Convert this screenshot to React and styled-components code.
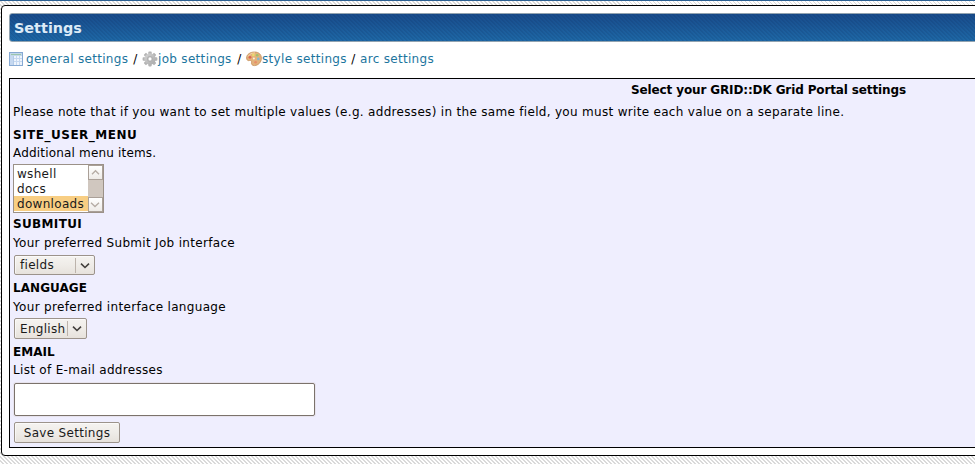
import React from "react";
import styled, { createGlobalStyle } from "styled-components";

const Global = createGlobalStyle`
  * { box-sizing: border-box; }
  html, body { margin: 0; height: 464px; overflow: hidden; }
  body {
    font-family: "DejaVu Sans", sans-serif;
    font-size: 12px;
    letter-spacing: 0.31px;
    color: #000;
    background: repeating-linear-gradient(45deg, #fff 0 1.7px, #dadada 1.7px 2.83px);
  }
`;

const Page = styled.div`
  width: 975px;
  height: 464px;
  overflow: hidden;
`;
const TopStrip = styled.div`
  height: 1px;
  background: #2a5f92;
`;
const Panel = styled.main`
  width: 1536px;
  height: 451px;
  margin: 4px 0 0 1px;
  padding: 7px;
  border: 1px solid #000;
  border-radius: 4px;
  background: #fff;
`;
const TitleBar = styled.h1`
  height: 29px;
  margin: 0;
  padding-left: 4px;
  border: 1px solid #92a3b0;
  border-radius: 3px;
  background:
    repeating-linear-gradient(45deg, rgba(0, 20, 60, 0.09) 0 1.41px, transparent 1.41px 2.83px),
    linear-gradient(#184b8b, #1e68a6);
  color: #dcebf7;
  font-size: 14.4px;
  font-weight: 700;
  line-height: 28px;
  letter-spacing: 0;
`;
const Nav = styled.nav`
  display: flex;
  align-items: center;
  height: 33px;
  white-space: pre;
`;
const NavLink = styled.a`
  display: flex;
  align-items: center;
  width: ${(p) => p.$width}px;
  gap: ${(p) => p.$gap || 0}px;
  color: #1c759e;
`;
const Slash = styled.span`
  width: 13px;
  text-align: center;
`;
const SettingsBox = styled.form`
  width: 1519px;
  height: 370px;
  margin-top: 3px;
  padding-left: 3px;
  border: 1px solid #000;
  background: #efeefe;
`;
const Line = styled.div`
  height: ${(p) => p.$height}px;
  line-height: ${(p) => p.$height + 2}px;
  letter-spacing: ${(p) => p.$tracking ?? 0.31}px;
  white-space: nowrap;
`;
const Heading = styled(Line)`
  font-weight: 700;
`;
const BoxTitle = styled(Heading)`
  padding-right: 3px;
  text-align: center;
`;
const ListBox = styled.div`
  display: flex;
  width: 91px;
  height: 49px;
  margin-top: 4px;
  border: 1px solid #9b9188;
  background: #fff;
`;
const Options = styled.div`
  flex: 1;
`;
const Option = styled.div`
  height: 15px;
  padding-left: 3px;
  color: #1a1a1a;
  line-height: 17px;
  white-space: nowrap;
  background: ${(p) => (p.$selected ? "#f8ce83" : "#fff")};
  &:first-child { height: 16px; line-height: 18px; }
`;
const ScrollBar = styled.div`
  display: flex;
  flex-direction: column;
  justify-content: space-between;
  width: 15px;
  background: #d0c7bf;
`;
const ScrollButton = styled.div`
  display: grid;
  place-items: center;
  height: 15px;
  border: 1px solid #aaa098;
  background: linear-gradient(#fff, #eeebe7);
`;
const Button = styled.div`
  display: flex;
  align-items: center;
  justify-content: ${(p) => (p.$center ? "center" : "flex-start")};
  width: ${(p) => p.$width}px;
  height: ${(p) => p.$height}px;
  margin: ${(p) => p.$top}px 0 0 1px;
  padding: 0 0 0 ${(p) => (p.$center ? 0 : 5)}px;
  border: 1px solid #9c938b;
  border-radius: 2px;
  background: linear-gradient(#f5f3f0, #efece8 50%, #e7e2dc);
  box-shadow: inset 1px 1px 0 rgba(255, 255, 255, 0.6);
  color: #1a1a1a;
  font: inherit;
  letter-spacing: 0.3px;
`;
const Arrow = styled.span`
  display: grid;
  place-items: center;
  width: 19px;
  height: 15px;
  margin-left: auto;
  border-left: 1px solid #bcb3ab;
`;
const TextArea = styled.textarea`
  display: block;
  width: 301px;
  height: 33px;
  margin: 7px 0 0 1px;
  border: 1px solid #7b726b;
  border-radius: 2px;
  background: #fff;
  box-shadow: 0 0 0 1px #e7e3ed;
  resize: none;
  outline: 0;
`;

function Chevron({ up, color = "#423f3c", weight = 1.6 }) {
  return (
    <svg width="11" height="11" viewBox="0 0 11 11" fill="none">
      <path d={up ? "M2 7.2 5.5 3.7 9 7.2" : "M1 3.7 5 7.5 9 3.7"} stroke={color} strokeWidth={weight} />
    </svg>
  );
}

function TableIcon() {
  return (
    <svg width="14" height="14" viewBox="0 0 14 14" shapeRendering="crispEdges">
      <path fill="#86a9d3" d="M0 0h14v14H0z" />
      <path fill="#eef4fc" d="M1 1h12v12H1z" />
      <path fill="#c3d8ea" d="M1 1h12v3H1z" />
      <path fill="#9cc5ac" d="M2 2h10v1H2z" />
      <path fill="#c5d8f0" d="M1 4h3v9H1zM5 6h8v1H5zM5 9h8v1H5zM7 4h1v9H7zM10 4h1v9h-1z" />
      <path fill="#b3cbe8" d="M4 4h1v9H4z" />
    </svg>
  );
}

function GearIcon() {
  return (
    <svg width="16" height="16" viewBox="0 0 16 16">
      <defs>
        <linearGradient id="steel" x1="0" y1="0" x2="1" y2="1">
          <stop offset="0" stopColor="#d6d6d6" />
          <stop offset="1" stopColor="#a8a8a8" />
        </linearGradient>
      </defs>
      <g fill="#b4b4b4">
        {[0, 45, 90, 135].map((a) => (
          <rect key={a} x="6.3" y="0.6" width="3.4" height="14.8" rx="0.8" transform={`rotate(${a} 8 8)`} />
        ))}
      </g>
      <circle cx="8" cy="8" r="5.7" fill="url(#steel)" />
      <circle cx="8" cy="8" r="2.6" fill="#c6c6c6" stroke="#a9a9a9" strokeWidth="0.7" />
      <circle cx="8" cy="8" r="1.4" fill="#fff" />
    </svg>
  );
}

function PaletteIcon() {
  return (
    <svg width="16" height="16" viewBox="0 0 16 16">
      <path
        d="M8.500 1C4 1 .6 3.500.6 7c0 2 1.300 3 3 2.500 1.500-.4 2.200.6 1.900 1.900-.4 1.900.8 3.400 3 3.200 4-.3 6.900-3.500 6.900-7.400C15.400 3.400 12.800 1 8.500 1z"
        fill="#e2b27c"
        stroke="#c58f5b"
        strokeWidth="0.8"
      />
      <path d="M2 5.500C3.500 3 6 1.900 9 1.900" stroke="#f3d4ab" fill="none" />
      <circle cx="4" cy="6.300" r="1.400" fill="#dc6450" />
      <circle cx="7.400" cy="3.900" r="1.300" fill="#eddb6c" />
      <circle cx="11.200" cy="4.200" r="1.300" fill="#9cc36b" />
      <circle cx="12.300" cy="7.900" r="1.300" fill="#82b5d3" />
      <circle cx="9.600" cy="11.300" r="1.300" fill="#e88e69" />
      <circle cx="7.900" cy="7.500" r="1" fill="#fbf0df" />
    </svg>
  );
}

function Select({ value, width, height, top }) {
  return (
    <Button $width={width} $height={height} $top={top}>
      {value}
      <Arrow><Chevron /></Arrow>
    </Button>
  );
}

export default function App() {
  return (
    <Page>
      <Global />
      <TopStrip />
      <Panel>
        <TitleBar>Settings</TitleBar>
        <Nav>
          <NavLink $width={120} $gap={3}><TableIcon />general settings</NavLink>
          <Slash>/</Slash>
          <NavLink $width={91}><GearIcon />job settings</NavLink>
          <Slash>/</Slash>
          <NavLink $width={101}><PaletteIcon />style settings</NavLink>
          <Slash>/</Slash>
          <NavLink $width={75}>arc settings</NavLink>
        </Nav>
        <SettingsBox>
          <BoxTitle $height={21} $tracking={-0.13}>Select your GRID::DK Grid Portal settings</BoxTitle>
          <Line $height={23}>
            Please note that if you want to set multiple values (e.g. addresses) in the same field, you must write each value on a separate line.
          </Line>
          <Heading $height={22} $tracking={0.5}>SITE_USER_MENU</Heading>
          <Line $height={15} $tracking={0.18}>Additional menu items.</Line>
          <ListBox>
            <Options>
              <Option>wshell</Option>
              <Option>docs</Option>
              <Option $selected>downloads</Option>
            </Options>
            <ScrollBar>
              <ScrollButton><Chevron up color="#b5aca4" weight={1.3} /></ScrollButton>
              <ScrollButton><Chevron color="#b5aca4" weight={1.3} /></ScrollButton>
            </ScrollBar>
          </ListBox>
          <Heading $height={21} $tracking={0.35}>SUBMITUI</Heading>
          <Line $height={17}>Your preferred Submit Job interface</Line>
          <Select value="fields" width={81} height={20} top={4} />
          <Heading $height={25} $tracking={0.05}>LANGUAGE</Heading>
          <Line $height={13} $tracking={0.33}>Your preferred interface language</Line>
          <Select value="English" width={73} height={21} top={5} />
          <Heading $height={24} $tracking={0.05}>EMAIL</Heading>
          <Line $height={13}>List of E-mail addresses</Line>
          <TextArea aria-label="Email" />
          <Button as="button" type="button" $center $width={106} $height={21} $top={6}>Save Settings</Button>
        </SettingsBox>
      </Panel>
    </Page>
  );
}
